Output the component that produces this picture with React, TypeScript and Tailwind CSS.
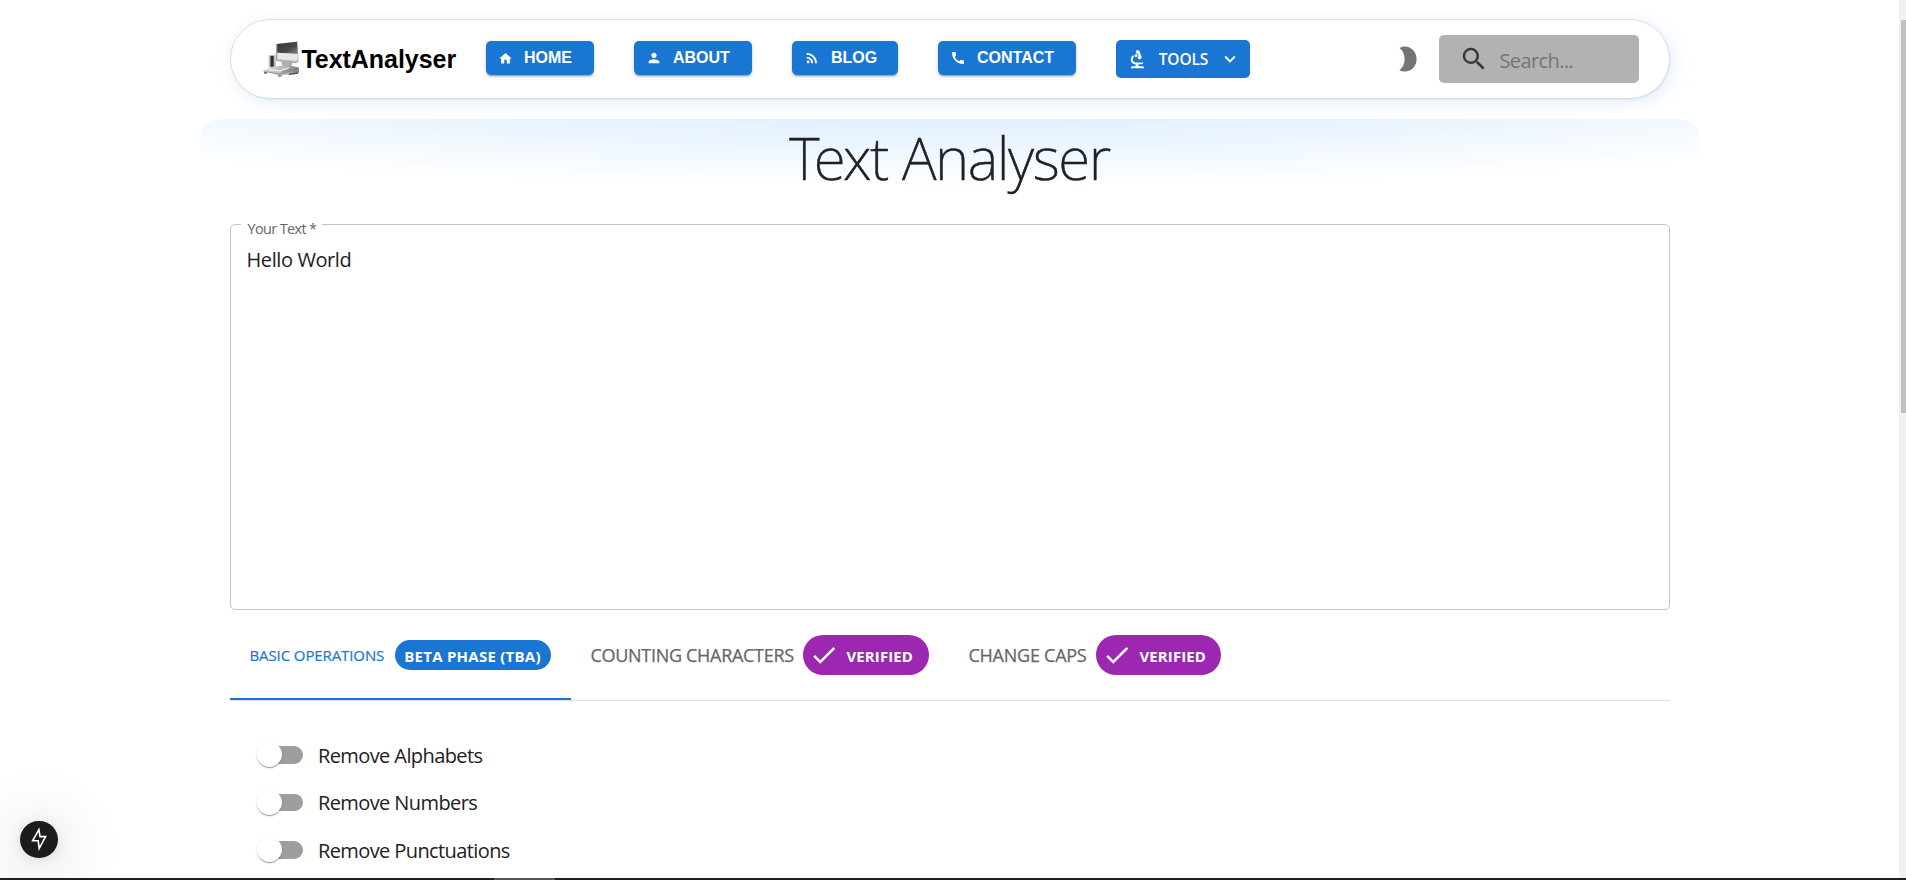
import type { ReactNode } from "react";
import type { IconType } from "react-icons";
import {
  MdBiotech,
  MdCall,
  MdCheck,
  MdExpandMore,
  MdHome,
  MdPerson,
  MdRssFeed,
  MdSearch,
} from "react-icons/md";

const navLinks: { label: string; Icon: IconType; width: string; iconSize: number }[] = [
  { label: "HOME", Icon: MdHome, width: "w-[108px]", iconSize: 15 },
  { label: "ABOUT", Icon: MdPerson, width: "w-[118px]", iconSize: 16 },
  { label: "BLOG", Icon: MdRssFeed, width: "w-[106px]", iconSize: 16 },
  { label: "CONTACT", Icon: MdCall, width: "w-[138px]", iconSize: 16 },
];

const switches = ["Remove Alphabets", "Remove Numbers", "Remove Punctuations"];

function ComputerLogo() {
  return (
    <svg className="ml-px h-[38px] w-[38px] shrink-0" viewBox="0 0 38 38">
      <defs>
        <linearGradient id="screen" x1="0" y1="0" x2="1" y2="1">
          <stop offset="0" stopColor="#333" />
          <stop offset="0.6" stopColor="#4a4a4a" />
          <stop offset="1" stopColor="#8a8a8a" />
        </linearGradient>
        <linearGradient id="base" x1="0" y1="0" x2="1" y2="0">
          <stop offset="0" stopColor="#d8d8d8" />
          <stop offset="0.6" stopColor="#b5b5b5" />
          <stop offset="1" stopColor="#7c7c7c" />
        </linearGradient>
      </defs>
      <path d="M13.5 4 34.5 1.5 35.5 21 33 23 13.5 20.5z" fill="#c4c4c4" />
      <path d="M14.2 4 34 1.8 34.8 14 14.2 12.8z" fill="url(#screen)" />
      <path d="M14.5 12.8 34.6 14 34.2 20.5 14.5 19z" fill="#e9e9e9" />
      <path d="M13.6 4v16.5L33 22.6l2.5-2" fill="none" stroke="#8a8a8a" strokeWidth="0.8" />
      <path d="M18 21.5h12l-1.5 4.5h-9z" fill="#b0b0b0" />
      <path d="M5.6 15.2 12.6 14.5 13 26.5 5.8 27z" fill="#bdbdbd" />
      <path d="M7.5 16h3.2v10.8H7.5z" fill="#2d2d2d" />
      <path d="M0.5 30.8 8 27 25 25 35.8 27.5 35.8 33 17 35.5z" fill="url(#base)" />
      <path d="M0.5 31.2 16 34.2 35.8 28.5" fill="none" stroke="#777" strokeWidth="0.7" />
      <path d="M6 29.3 17 31 26 27.5" fill="none" stroke="#f1f1f1" strokeWidth="1.2" />
      <path d="M19 32 33 27.8" fill="none" stroke="#8b8b8b" strokeWidth="1" />
      <path d="M1 32.6 4 33.2M15 36h3.5M26 34.4l9-1.3" fill="none" stroke="#444" strokeWidth="1.2" />
    </svg>
  );
}

function Header() {
  return (
    <header className="mx-auto mt-[19px] flex h-20 w-[1440px] items-center rounded-full border border-[#dadde1] bg-white pr-[30px] pl-[31px] shadow-[0_0_12px_rgba(85,166,246,0.03),1px_1.5px_2px_-1px_rgba(85,166,246,0.2),4px_4px_20px_-3px_rgba(85,166,246,0.2)]">
      <div className="flex w-[224px] items-center">
        <ComputerLogo />
        <span className="pl-px font-['Liberation_Sans',Arial,sans-serif] text-[25px] leading-[30px] font-bold tracking-[-0.05px] text-black">
          TextAnalyser
        </span>
      </div>
      <nav className="flex items-center gap-10">
        {navLinks.map(({ label, Icon, width, iconSize }) => (
          <a
            key={label}
            className={`${width} mb-0.5 flex h-[34px] items-center gap-[11px] rounded-[5px] bg-[#1976d2] pl-[12.5px] font-['Liberation_Sans',Arial,sans-serif] text-base font-bold text-white shadow-[0_3px_1px_-2px_rgba(0,0,0,0.2),0_2px_2px_0_rgba(0,0,0,0.14),0_1px_5px_0_rgba(0,0,0,0.12)]`}
          >
            <Icon size={iconSize} className="shrink-0" />
            {label}
          </a>
        ))}
        <button className="flex h-[38px] w-[134px] items-center gap-2.5 rounded-[5px] bg-[#1976d2] pl-2.5 text-[15.5px] font-semibold text-white">
          <MdBiotech size={23} className="shrink-0" />
          <span className="w-[50px] pt-0.5 tracking-[-0.1px]">TOOLS</span>
          <MdExpandMore size={22} className="shrink-0" />
        </button>
      </nav>
      <svg
        className="mr-[22px] ml-auto h-[26px] w-[18px] text-[#757575]"
        viewBox="0 0 18 26"
        fill="currentColor"
      >
        <path d="M5.8 0.4C12.6 0.4 17.6 6 17.6 13S12.6 25.6 5.8 25.6C3.8 25.6 1.9 25.1 0.4 24 3.9 21.6 5.6 17.6 5.6 13S3.9 4.4 0.4 2C1.9 0.9 3.8 0.4 5.8 0.4z" />
      </svg>
      <div className="flex h-12 w-[200px] items-center rounded-[5px] bg-[#b2b2b2] pl-5">
        <MdSearch size={30} className="shrink-0 text-[#373737]" />
        <span className="pt-[3px] pl-[11px] text-xl tracking-[-0.6px] text-[#757575]">Search...</span>
      </div>
    </header>
  );
}

function VerifiedPill({ width }: { width: string }) {
  return (
    <span
      className={`${width} flex h-10 items-center gap-2 rounded-full bg-[#9c27b0] pl-1.5 text-[15px] font-bold text-white`}
    >
      <MdCheck size={30} className="shrink-0" />
      <span className="pt-0.5 tracking-[0.1px]">VERIFIED</span>
    </span>
  );
}

function Tab({ children, className }: { children: ReactNode; className: string }) {
  return <div className={`flex h-[90px] items-center ${className}`}>{children}</div>;
}

function Tabs() {
  return (
    <div className="flex border-b border-[#e0e0e0] whitespace-nowrap">
      <Tab className="w-[341px] border-b-2 border-[#1976d2] pt-0.5 pl-5">
        <span className="w-[145px] text-[15px] font-medium tracking-[-0.1px] text-[#1976d2] [-webkit-text-stroke:0.2px_#1976d2]">
          BASIC OPERATIONS
        </span>
        <span className="flex h-[30px] w-[156px] items-center justify-center rounded-full bg-[#1976d2] pt-0.5 text-[15px] font-bold tracking-[0.25px] text-white">
          BETA PHASE (TBA)
        </span>
      </Tab>
      <Tab className="w-[378px] pl-5">
        <span className="w-[212px] text-lg font-medium tracking-[-0.3px] text-[#666666] [-webkit-text-stroke:0.25px_#666666]">
          COUNTING CHARACTERS
        </span>
        <VerifiedPill width="w-[126px]" />
      </Tab>
      <Tab className="pl-5">
        <span className="w-[127px] text-lg font-medium tracking-[-0.25px] text-[#666666] [-webkit-text-stroke:0.25px_#666666]">
          CHANGE CAPS
        </span>
        <VerifiedPill width="w-[125px]" />
      </Tab>
    </div>
  );
}

function SwitchRow({ label }: { label: string }) {
  return (
    <label className="flex h-[47.5px] items-center gap-[15.5px] pl-[30.5px]">
      <span className="relative h-[17.5px] w-[42.5px] rounded-full bg-[#9e9e9e]">
        <span className="absolute -top-[3.75px] -left-[3.5px] h-[25px] w-[25px] rounded-full bg-white shadow-[0_2px_1px_-1px_rgba(0,0,0,0.2),0_1px_1px_0_rgba(0,0,0,0.14),0_1px_3px_0_rgba(0,0,0,0.12)]" />
      </span>
      <span className="pt-0.5 text-xl tracking-[-0.6px] text-[#212121]">{label}</span>
    </label>
  );
}

export default function App() {
  return (
    <div className="relative flex h-[880px] w-full overflow-hidden bg-white font-['Open_Sans','Noto_Sans',sans-serif]">
      <main className="w-[1899px] shrink-0">
        <Header />
        <section className="mx-auto mt-5 w-[1500px] rounded-t-[20px] bg-[radial-gradient(ellipse_80%_50%_at_50%_-20%,hsl(210,100%,90%),transparent)] bg-size-[100%_230px] bg-no-repeat px-[30px]">
          <h1 className="h-[105px] pt-0.5 text-center font-['Noto_Sans',sans-serif] text-[58.5px] leading-[73px] font-extralight tracking-[-1.4px] text-[#212121] [-webkit-text-stroke:0.5px_#212121]">
            Text Analyser
          </h1>
          <div className="relative h-[386px] rounded-[5px] border border-[#c4c4c4] px-4 pt-5">
            <span className="absolute -top-1.5 left-[10px] w-[81px] bg-white pl-[7px] text-[14.5px] leading-5 tracking-[-0.65px] whitespace-nowrap text-[#666666]">
              Your Text *
            </span>
            <p className="text-xl leading-[29px] tracking-[-0.4px] text-[#212121]">Hello World</p>
          </div>
          <Tabs />
          <div className="mt-[30px]">
            {switches.map((label) => (
              <SwitchRow key={label} label={label} />
            ))}
          </div>
        </section>
      </main>
      <div className="flex-1 bg-[#f1f1f1] pt-5 pl-0.5">
        <div className="h-[393px] bg-[#c1c1c1]" />
      </div>
      <div className="absolute bottom-[22px] left-5 h-[37px] w-[38px] rounded-full bg-[#1c1c1e] shadow-[0_8px_60px_16px_rgba(0,0,0,0.09),0_2px_12px_rgba(0,0,0,0.1)]">
        <svg
          className="h-[37px] w-[38px]"
          viewBox="0 0 38 37"
          fill="none"
          stroke="white"
          strokeWidth="1.6"
        >
          <path d="M18.9 8.6 12.6 19.8H18.2L19.2 27.4 25.6 15.6H20z" />
        </svg>
      </div>
      <div className="absolute bottom-0 left-0 h-0.5 w-full bg-[#201c1f] pl-[494px]">
        <div className="h-0.5 w-[61px] bg-[#555555]" />
      </div>
    </div>
  );
}
